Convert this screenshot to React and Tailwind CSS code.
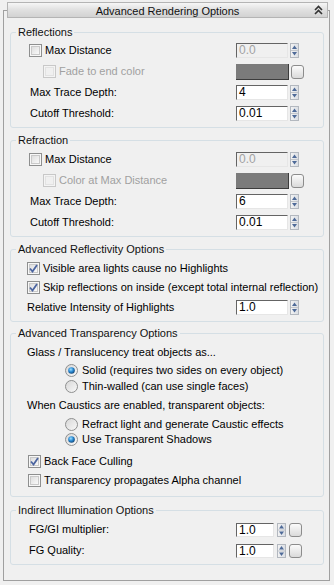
import React from 'react';

// spinner arrows next to numeric fields
const Spinner = ({ h = 15 }) => (
    <svg width="9" height={h} className="shrink-0">
        <defs>
            <linearGradient id="spg" x1="0" y1="0" x2="1" y2="0">
                <stop offset="0" stopColor="#f4f4f4" />
                <stop offset="1" stopColor="#d9dde3" />
            </linearGradient>
        </defs>
        <rect x="0.5" y="0.5" width="8" height={h - 1} fill="url(#spg)" stroke="#b3b8bf" />
        <line x1="1" y1={h / 2} x2="8" y2={h / 2} stroke="#c2c6cc" />
        <polygon points={`2,${h / 2 - 1.5} 7,${h / 2 - 1.5} 4.5,${h / 2 - 5}`} fill="#4e6a98" />
        <polygon points={`2,${h / 2 + 1.5} 7,${h / 2 + 1.5} 4.5,${h / 2 + 5}`} fill="#4e6a98" />
    </svg>
);

const Check = ({ checked = false, disabled = false }) => (
    <svg width="13" height="13" className="shrink-0">
        <defs>
            <linearGradient id="cbg" x1="0" y1="0" x2="1" y2="1">
                <stop offset="0" stopColor="#dcdcdc" />
                <stop offset="1" stopColor="#fbfbfb" />
            </linearGradient>
        </defs>
        <rect x="0.5" y="0.5" width="12" height="12" fill={disabled ? '#f4f4f4' : '#f7f7f7'} stroke={disabled ? '#c8c8c8' : '#8e8f8f'} />
        <rect x="2.5" y="2.5" width="8" height="8" fill={disabled ? '#f0f0f0' : 'url(#cbg)'} stroke={disabled ? '#e2e2e2' : '#c9c9c9'} />
        {checked && (
            <path d="M3 6.5 L5.5 9.5 L10 3" fill="none" stroke="#4c65a0" strokeWidth="1.8" />
        )}
    </svg>
);

const Radio = ({ on = false }) => (
    <svg width="13" height="13" className="shrink-0">
        <defs>
            <radialGradient id="rdo" cx="0.4" cy="0.35" r="0.7">
                <stop offset="0" stopColor="#9ee0ff" />
                <stop offset="0.5" stopColor="#2a8ad4" />
                <stop offset="1" stopColor="#10406e" />
            </radialGradient>
            <linearGradient id="rbg" x1="0" y1="0" x2="1" y2="1">
                <stop offset="0" stopColor="#d6d6d6" />
                <stop offset="1" stopColor="#fafafa" />
            </linearGradient>
        </defs>
        <circle cx="6.5" cy="6.5" r="6" fill="url(#rbg)" stroke="#8e8f8f" />
        {on && <circle cx="6.5" cy="6.5" r="3.3" fill="url(#rdo)" />}
    </svg>
);

const Field = ({ value, disabled = false, w = 'w-[52px]', h = 'h-[15px]' }) => (
    <div
        className={`${w} ${h} shrink-0 border-t border-l border-t-[#646464] border-l-[#646464] border-r border-b border-r-[#e6e6e6] border-b-[#e6e6e6] pl-[2px] text-[12px] leading-[13px] ${disabled ? 'bg-[#f0f0f0] text-[#a2a2a2]' : 'bg-white text-black'}`}
    >
        {value}
    </div>
);

const ColorBtn = () => (
    <div className="w-[13px] h-[14px] shrink-0 rounded-[3px] border border-[#8c8c8c] bg-gradient-to-b from-[#fbfbfb] to-[#dadada]"></div>
);

const Swatch = () => (
    <div className="w-[53px] h-[16px] shrink-0 bg-[#7b7b7b] border-r border-b border-r-[#3c3c3c] border-b-[#3c3c3c]"></div>
);

const Group = ({ title, className = '', children }) => (
    <div className={`ml-[6px] mr-[5px] border border-[#d5dfe5] rounded-[3px] ${className}`}>
        <div className="-mt-[7px] ml-[5px] px-[2px] w-fit h-[13px] leading-[13px] bg-[#f0f0f0] text-[#111]">{title}</div>
        {children}
    </div>
);

const Row = ({ h = 'h-[21px]', children, right }) => (
    <div className={`flex items-center ${h}`}>
        <div className="flex-1 flex items-center min-w-0">{children}</div>
        {right && <div className="w-[87px] shrink-0 flex items-center gap-[2px]">{right}</div>}
    </div>
);

const TraceGroup = ({ title, second, depth, pad, className }) => (
    <Group title={title} className={className}>
        <div className={`${pad} pb-[3px]`}>
            <Row right={<><Field value="0.0" disabled /><Spinner /></>}>
                <div className="pl-[18px] flex items-center gap-[3px]">
                    <Check />
                    <span>Max Distance</span>
                </div>
            </Row>
            <Row right={<><Swatch /><ColorBtn /></>}>
                <div className="pl-[32px] flex items-center gap-[3px] text-[#a0a0a0]">
                    <Check disabled />
                    <span>{second}</span>
                </div>
            </Row>
            <Row right={<><Field value={depth} /><Spinner /></>}>
                <span className="pl-[19px]">Max Trace Depth:</span>
            </Row>
            <Row right={<><Field value="0.01" /><Spinner /></>}>
                <span className="pl-[19px]">Cutoff Threshold:</span>
            </Row>
        </div>
    </Group>
);

export default function App() {
    return (
        <div className="w-[334px] h-[585px] bg-[#f0f0f0] overflow-hidden pt-[10px] pl-[3px] pr-[4px] text-[11px] text-black font-['Tahoma','Liberation_Sans',Arial,sans-serif]">
            <div className="h-[571px] border border-[#a0a0a0]">
                {/* rollout title bar */}
                <div className="-mt-[9px] ml-[3px] mr-[1px] h-[16px] border border-[#b4b4b4] bg-gradient-to-b from-[#f6f6f6] via-[#e0e0e0] to-[#d2d2d2] flex items-center relative">
                    <span className="flex-1 text-center text-[11px] leading-[14px] pt-[1px] text-[#111]">Advanced Rendering Options</span>
                    <svg width="9" height="10" className="absolute right-[4px] top-[2px]">
                        <polyline points="1,5 4.5,1.5 8,5" fill="none" stroke="#333" strokeWidth="1.6" />
                        <polyline points="1,9 4.5,5.5 8,9" fill="none" stroke="#333" strokeWidth="1.6" />
                    </svg>
                </div>

                <TraceGroup title="Reflections" second="Fade to end color" depth="4" pad="pt-[1px]" className="mt-[14px]" />
                <TraceGroup title="Refraction" second="Color at Max Distance" depth="6" pad="pt-[2px]" className="mt-[12px]" />

                <Group title="Advanced Reflectivity Options" className="mt-[12px]">
                    <div className="pt-[3px] pb-[4px]">
                        <div className="h-[19px] flex items-center gap-[3px] pl-[16px]">
                            <Check checked />
                            <span>Visible area lights cause no Highlights</span>
                        </div>
                        <div className="h-[19px] flex items-center gap-[3px] pl-[16px]">
                            <Check checked />
                            <span>Skip reflections on inside (except total internal reflection)</span>
                        </div>
                        <Row h="h-[20px]" right={<><Field value="1.0" /><Spinner /></>}>
                            <span className="pl-[16px]">Relative Intensity of Highlights</span>
                        </Row>
                    </div>
                </Group>

                <Group title="Advanced Transparency Options" className="mt-[11px]">
                    <div className="pt-[3px] pb-[7px]">
                        <div className="h-[18px] flex items-center pl-[16px]">Glass / Translucency treat objects as...</div>
                        <div className="mt-[2px] h-[15px] flex items-center gap-[4px] pl-[54px]">
                            <Radio on />
                            <span>Solid (requires two sides on every object)</span>
                        </div>
                        <div className="h-[16px] flex items-center gap-[4px] pl-[54px]">
                            <Radio />
                            <span>Thin-walled (can use single faces)</span>
                        </div>
                        <div className="mt-[2px] h-[18px] flex items-center pl-[16px]">When Caustics are enabled, transparent objects:</div>
                        <div className="mt-[2px] h-[16px] flex items-center gap-[4px] pl-[54px]">
                            <Radio />
                            <span>Refract light and generate Caustic effects</span>
                        </div>
                        <div className="h-[15px] flex items-center gap-[4px] pl-[54px]">
                            <Radio on />
                            <span>Use Transparent Shadows</span>
                        </div>
                        <div className="mt-[4px] h-[20px] flex items-center gap-[3px] pl-[17px]">
                            <Check checked />
                            <span>Back Face Culling</span>
                        </div>
                        <div className="h-[18px] flex items-center gap-[3px] pl-[17px]">
                            <Check />
                            <span>Transparency propagates Alpha channel</span>
                        </div>
                    </div>
                </Group>

                <Group title="Indirect Illumination Options" className="mt-[13px]">
                    <div className="pt-[2px] pb-[3px]">
                        {['FG/GI multiplier:', 'FG Quality:'].map((label) => (
                            <div key={label} className="h-[21px] flex items-center">
                                <span className="flex-1 pl-[18px]">{label}</span>
                                <div className="w-[87px] shrink-0 flex items-center">
                                    <Field value="1.0" w="w-[38px]" h="h-[14px]" />
                                    <div className="ml-[3px]"><Spinner h={14} /></div>
                                    <div className="ml-[3px]"><ColorBtn /></div>
                                </div>
                            </div>
                        ))}
                    </div>
                </Group>
            </div>
        </div>
    );
}
